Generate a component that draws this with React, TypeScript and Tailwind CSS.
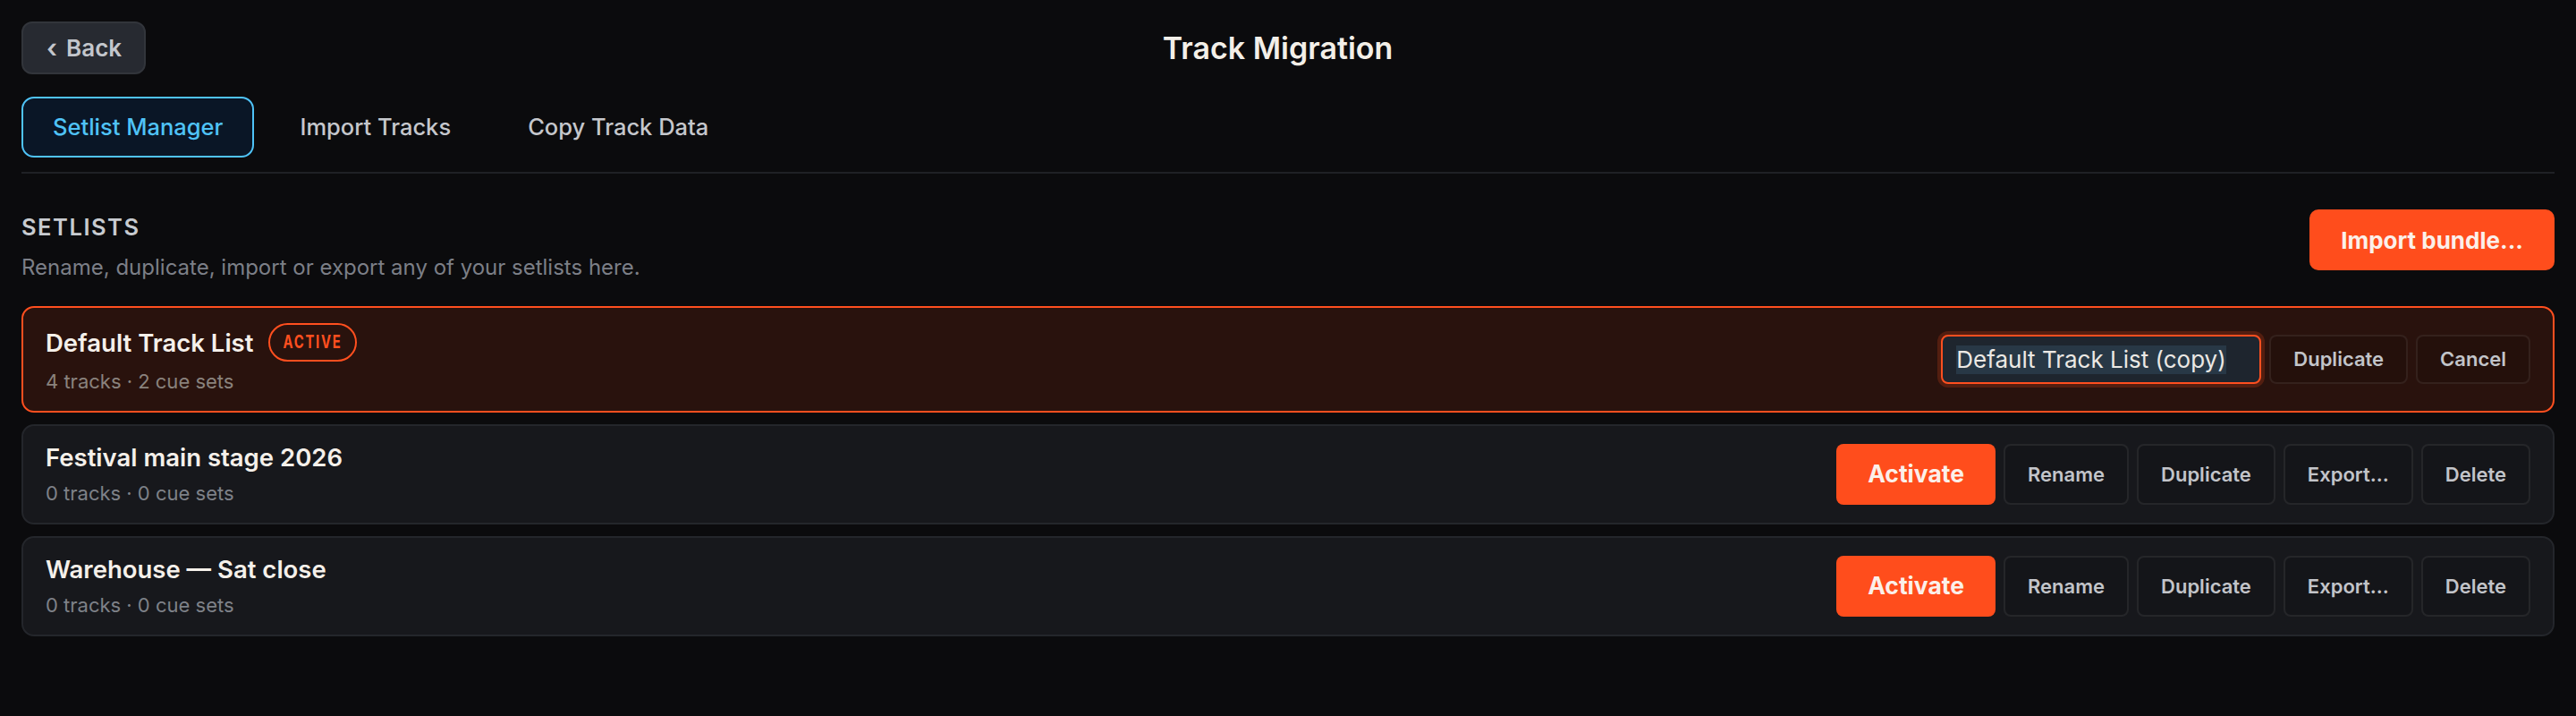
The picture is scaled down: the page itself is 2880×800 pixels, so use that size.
import { useState } from 'react'

type Setlist = {
  name: string
  tracks: number
  cueSets: number
  active?: boolean
}

const setlists: Setlist[] = [
  { name: 'Default Track List', tracks: 4, cueSets: 2, active: true },
  { name: 'Festival main stage 2026', tracks: 0, cueSets: 0 },
  { name: 'Warehouse — Sat close', tracks: 0, cueSets: 0 },
]

const tabs = ['Setlist Manager', 'Import Tracks', 'Copy Track Data']

function GhostButton({ children }: { children: React.ReactNode }) {
  return (
    <button className="px-[25px] rounded-[8px] border-2 border-white/[0.07] bg-black/10 text-[22px] font-semibold text-[#c2c4c9]">
      {children}
    </button>
  )
}

function SetlistRow({ setlist }: { setlist: Setlist }) {
  const meta = `${setlist.tracks} tracks · ${setlist.cueSets} cue sets`

  return (
    <div
      className={
        setlist.active
          ? 'flex items-center justify-between rounded-[14px] border-2 border-[#ff4f1f] bg-[#29120d] px-[25px] py-[17px]'
          : 'flex items-center justify-between rounded-[14px] border-2 border-[#24262b] bg-[#17181c] px-[25px] py-[17px]'
      }
    >
      <div>
        <div className="flex items-center gap-[17px]">
          <span className="text-[27.5px] leading-[36px] font-semibold text-[#f5f0ea]">{setlist.name}</span>
          {setlist.active && (
            // condensed display face isn't installed, so squeeze the caps
            <span className="flex h-[43px] w-[99px] items-center justify-center rounded-full border-2 border-[#ff4f1f] text-[19.5px] font-bold text-[#ff4f1f]">
              <span className="inline-block scale-x-[0.76] tracking-[0.12em]">ACTIVE</span>
            </span>
          )}
        </div>
        <div className={setlist.active ? 'mt-[6px] text-[22px] leading-[32px] text-[#8a827d]' : 'mt-[6px] text-[22px] leading-[32px] text-[#7e8188]'}>
          {meta}
        </div>
      </div>

      {setlist.active ? (
        <div className="flex items-stretch gap-[9px]">
          {/* rename-in-place field, text shown selected */}
          <div className="flex h-[55px] w-[358px] items-center rounded-[8px] border-2 border-[#ff4f1f] bg-[#1e252e] px-[15px] ring-4 ring-[#ff4f1f]/20">
            <span className="bg-[#283846] text-[26px] leading-[32px] text-[#ebe8e4]">Default Track List (copy)</span>
          </div>
          <GhostButton>Duplicate</GhostButton>
          <GhostButton>Cancel</GhostButton>
        </div>
      ) : (
        <div className="flex items-stretch gap-[9px]">
          <button className="h-[68px] rounded-[8px] bg-[#ff4d1c] px-[35px] text-[26.5px] font-bold text-[#fbf0ea]">
            Activate
          </button>
          <GhostButton>Rename</GhostButton>
          <GhostButton>Duplicate</GhostButton>
          <GhostButton>Export...</GhostButton>
          <GhostButton>Delete</GhostButton>
        </div>
      )}
    </div>
  )
}

export default function App() {
  const [tab, setTab] = useState(0)

  return (
    <div className="min-h-screen bg-[#0b0b0d] px-6 pt-6 font-[Inter,'Noto_Sans',sans-serif]">
      {/* header */}
      <div className="flex items-center">
        <button className="flex h-[59px] items-center gap-[10px] rounded-[12px] border-2 border-[#32353b] bg-[#272a31] pl-[26px] pr-[25px] text-[26px] font-semibold text-[#c3c6cc]">
          <span className="text-[29px] leading-none">‹</span>
          <span>Back</span>
        </button>
        <h1 className="flex-1 text-center text-[34px] font-semibold text-[#f3efe8]">Track Migration</h1>
        <div className="w-[162px]" />
      </div>

      {/* tabs */}
      <div className="mt-[25px] flex gap-4 border-b-2 border-[#1f2125] pb-4">
        {tabs.map((t, i) => (
          <button
            key={t}
            onClick={() => setTab(i)}
            className={
              i === tab
                ? 'h-[68px] rounded-[14px] border-2 border-[#4fc3f7] bg-[#0a1626] px-[33px] text-[25.5px] font-medium text-[#4fc3f7]'
                : 'h-[68px] rounded-[14px] border-2 border-transparent px-[33px] text-[25.5px] font-medium text-[#c5c7cc]'
            }
          >
            {t}
          </button>
        ))}
      </div>

      {/* setlists */}
      <div className="mt-10 flex items-start justify-between">
        <div>
          <h2 className="text-[25.5px] leading-[40px] font-semibold tracking-[0.06em] text-[#c8cbd0]">SETLISTS</h2>
          <p className="mt-[8px] text-[24px] leading-[34px] text-[#7c7f87]">
            Rename, duplicate, import or export any of your setlists here.
          </p>
        </div>
        <button className="h-[68px] rounded-[10px] bg-[#ff4d1c] px-[35px] text-[26px] font-bold text-[#fbf0ea]">
          Import bundle...
        </button>
      </div>

      <div className="mt-[26px] flex flex-col gap-[13px]">
        {setlists.map((s) => (
          <SetlistRow key={s.name} setlist={s} />
        ))}
      </div>
    </div>
  )
}
